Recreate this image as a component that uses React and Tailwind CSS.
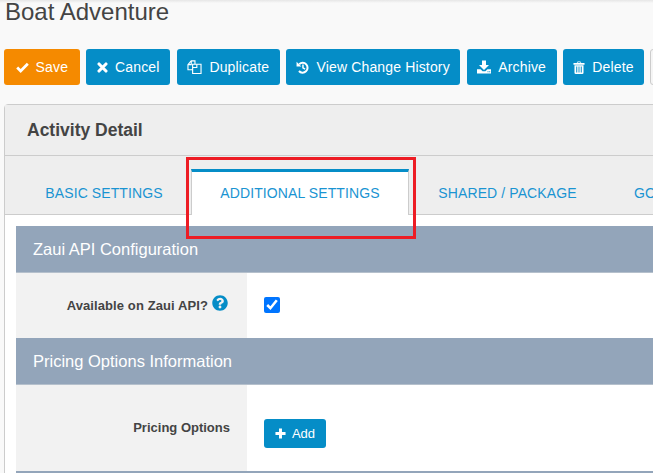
import React from "react";
import { FaQuestionCircle } from "react-icons/fa";

const IconCheck = () => (
  <svg viewBox="0 0 14 12" className="w-[13px] h-[11px]" fill="none" stroke="currentColor" strokeWidth="3">
    <path d="M1.2 6L5 9.8L12.8 2" />
  </svg>
);
const IconTimes = () => (
  <svg viewBox="0 0 12 12" className="w-[11px] h-[11px]" fill="none" stroke="currentColor" strokeWidth="3.4" strokeLinecap="round">
    <path d="M2.2 2.2L9.8 9.8M9.8 2.2L2.2 9.8" />
  </svg>
);
const IconFiles = () => (
  <svg viewBox="0 0 16 15" className="w-[15px] h-[14px]" fill="none" stroke="currentColor" strokeWidth="1.2">
    <path d="M6 10.5H1V5l3.5-4h4v3.5" />
    <path d="M4.5 1v4H1" />
    <path d="M6 4.6h5l4 0V14.4H6z" />
    <path d="M10.5 4.6v3.5H6" />
  </svg>
);
const IconHistory = () => (
  <svg viewBox="0 0 14 14" className="w-[13px] h-[13px]" fill="none" stroke="currentColor">
    <path d="M3.5 3.4A5.3 5.3 0 1 1 3.2 10.8" strokeWidth="2.2" />
    <path d="M0.6 0.8V6H5.8z" fill="currentColor" stroke="none" />
    <path d="M7.5 3.8V7.4L9.8 8.8" strokeWidth="1.6" />
  </svg>
);
const IconArchive = () => (
  <svg viewBox="0 0 14 14" className="w-[14px] h-[14px]" fill="currentColor">
    <path d="M5 0.5H9V5H12L7 10L2 5H5z" />
    <path fillRule="evenodd" d="M0 9.2H3.6L5.6 11.2H8.4L10.4 9.2H14V13.6H0zM10.5 11.2v1h1v-1zM12.2 11.2v1h1v-1z" />
  </svg>
);
const IconTrash = () => (
  <svg viewBox="0 0 13 14" className="w-[12px] h-[13px]" fill="currentColor">
    <path fillRule="evenodd" d="M4 2.2L5 0.4H8L9 2.2H12.5V4H0.5V2.2zM5.2 1.4L4.9 2.2H8.1L7.8 1.4z" />
    <path fillRule="evenodd" d="M1.6 4.6H11.4V12.6Q11.4 14 10 14H3Q1.6 14 1.6 12.6zM3.5 6V12.4H4.6V6zM6 6V12.4H7V6zM8.4 6V12.4H9.5V6z" />
  </svg>
);
const IconPlus = () => (
  <svg viewBox="0 0 12 12" className="w-[11px] h-[11px]" fill="none" stroke="currentColor" strokeWidth="3.2">
    <path d="M6 0.5V11.5M0.5 6H11.5" />
  </svg>
);

function Btn({ icon: Icon, label, w, color = "bg-[#058dc7]" }) {
  return (
    <button className={`${w} ${color} h-9 shrink-0 rounded-[3px] text-white text-sm tracking-[0.15px] flex items-center justify-center gap-[7px]`}>
      <Icon />
      <span>{label}</span>
    </button>
  );
}

function Section({ title }) {
  return (
    <div className="h-[47px] bg-[#93a5ba] border-b border-[#b5c0cc] text-white text-[16.5px] flex items-center pl-[17px] pt-px">
      {title}
    </div>
  );
}

function Row({ h, label, children, labelClass }) {
  return (
    <div className={`${h} flex`}>
      <div className={`w-[231px] bg-[#f2f2f2] flex justify-end text-[13px] font-bold text-[#444] ${labelClass}`}>
        {label}
      </div>
      <div className="flex-1 bg-white pl-[17px]">{children}</div>
    </div>
  );
}

export default function App() {
  return (
    <div className="relative w-[653px] h-[473px] overflow-hidden bg-[#f9f9f9] font-['Liberation_Sans',Arial,sans-serif] text-[#444]">
      <div className="absolute inset-x-0 top-0 h-[3px] bg-gradient-to-b from-[#e6e6e6] to-[#f9f9f9]" />
      <h1 className="text-2xl leading-6 pl-[5px] text-[#444]">Boat Adventure</h1>

      <div className="flex gap-[6.4px] pl-1 mt-[25px] w-[720px]">
        <Btn icon={IconCheck} label="Save" w="w-[75.7px]" color="bg-[#f58a00]" />
        <Btn icon={IconTimes} label="Cancel" w="w-[84.4px]" />
        <Btn icon={IconFiles} label="Duplicate" w="w-[102.8px]" />
        <Btn icon={IconHistory} label="View Change History" w="w-[174.2px]" />
        <Btn icon={IconArchive} label="Archive" w="w-[90px]" />
        <Btn icon={IconTrash} label="Delete" w="w-[81px]" />
        <div className="w-[40px] h-9 shrink-0 rounded-[3px] border border-[#ccc] bg-[#f5f5f5]" />
      </div>

      <div className="ml-1 mt-[19px] w-[700px] border border-[#ccc] rounded-tl-[4px] bg-white">
        <div className="h-[51px] bg-[#eeeeee] border-b border-[#ccc] flex items-center pl-[22px] pt-px text-[17.5px] font-bold text-[#444]">
          Activity Detail
        </div>
        <div className="h-[59px] bg-[#eeeeee] border-b border-[#ccc] flex items-start pt-[13px] text-[#1a94d2] text-sm tracking-[0.1px]">
          <div className="w-[186px] h-[45px] flex items-center justify-center pt-[2px] pl-[12px]">BASIC SETTINGS</div>
          <div className="w-[218px] h-[46px] bg-white border-t-[3px] border-t-[#058dc7] border-x border-x-[#ccc] flex items-center justify-center pb-[2px]">
            ADDITIONAL SETTINGS
          </div>
          <div className="w-[197px] h-[45px] flex items-center justify-center pt-[2px]">SHARED / PACKAGE</div>
          <div className="pt-[14px] pl-[28px]">GO</div>
        </div>
        <div className="pt-[11px] pl-[11px]">
          <Section title="Zaui API Configuration" />
          <Row h="h-[65px]" labelClass="pt-[23px] pr-[19px]" label={
            <span className="flex items-start gap-1 tracking-[0.1px]">
              Available on Zaui API?
              <FaQuestionCircle className="text-[#058dc7] text-base -mt-[1px]" />
            </span>
          }>
            <div className="pt-6">
              <input type="checkbox" defaultChecked readOnly className="block w-4 h-4 m-0 accent-[#0075ff]" />
            </div>
          </Row>
          <Section title="Pricing Options Information" />
          <Row h="h-[86px]" labelClass="pt-[33px] pr-[17px]" label="Pricing Options">
            <div className="pt-[34px]">
              <button className="w-[62px] h-[29px] rounded-[3px] bg-[#058dc7] text-white text-[13px] flex items-center justify-center gap-[6px]">
                <IconPlus />
                Add
              </button>
            </div>
          </Row>
          <div className="h-10 bg-[#93a5ba]" />
        </div>
      </div>

      <div className="absolute left-[186px] top-[157px] w-[230px] h-[82px] border-[3px] border-[#ed1c24]" />
    </div>
  );
}
